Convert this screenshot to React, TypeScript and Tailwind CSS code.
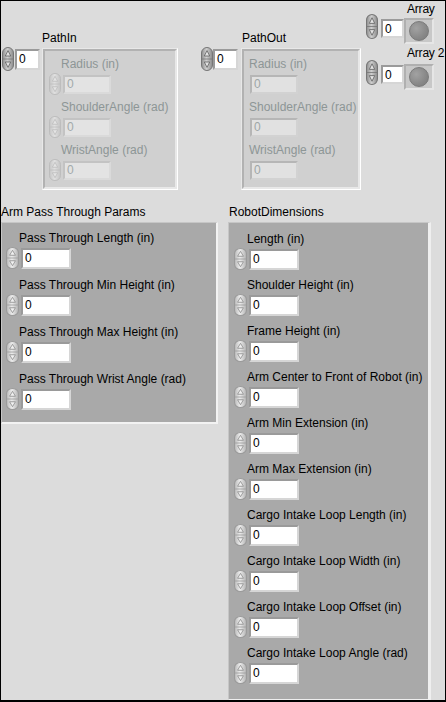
type Tone = "dark" | "light" | "ghost";

const tones: Record<Tone, { a: string; b: string; c: string; stroke: string; arrow: string; arrowStroke: string }> = {
  dark: { a: "#8e8e8e", b: "#cfcfcf", c: "#8a8a8a", stroke: "#767676", arrow: "#e4e4e4", arrowStroke: "#5e5e5e" },
  light: { a: "#b8b8b8", b: "#ececec", c: "#b2b2b2", stroke: "#9a9a9a", arrow: "#f0f0f0", arrowStroke: "#8a8a8a" },
  ghost: { a: "#c6c6c6", b: "#e0e0e0", c: "#c4c4c4", stroke: "#bcbcbc", arrow: "#e4e4e4", arrowStroke: "#bababa" },
};

function Spinner({ tone, className }: { tone: Tone; className: string }) {
  const t = tones[tone];
  return (
    <svg viewBox="0 0 12 24" preserveAspectRatio="none" className={`shrink-0 ${className}`} aria-hidden>
      <defs>
        <linearGradient id={`spin-${tone}`} x1="0" x2="1" y1="0" y2="0">
          <stop offset="0" stopColor={t.a} />
          <stop offset="0.45" stopColor={t.b} />
          <stop offset="1" stopColor={t.c} />
        </linearGradient>
      </defs>
      <rect x="0.5" y="0.5" width="11" height="23" rx="5.5" fill={`url(#spin-${tone})`} stroke={t.stroke} />
      <line x1="1" y1="12" x2="11" y2="12" stroke={t.stroke} strokeWidth="0.8" />
      <path d="M6 3.6 L8.7 9 H3.3 Z" fill={t.arrow} stroke={t.arrowStroke} strokeWidth="0.8" />
      <path d="M3.3 15 H8.7 L6 20.4 Z" fill={t.arrow} stroke={t.arrowStroke} strokeWidth="0.8" />
    </svg>
  );
}

type BoxKind = "control" | "disabled" | "indicator";

function Box({ kind, className }: { kind: BoxKind; className: string }) {
  const look =
    kind === "control"
      ? "bg-white text-black border-t-[#9a9a9a] border-l-[#9a9a9a] border-r-[#d6d6d6] border-b-[#d6d6d6]"
      : kind === "disabled"
        ? "bg-[#e3e3e3] text-[#a2aaaa] border-t-[#c3c3c3] border-l-[#c3c3c3] border-r-[#dadada] border-b-[#dadada]"
        : "bg-[#e1e1e1] text-[#9ea6a6] border-t-[#b6b6b6] border-l-[#b6b6b6] border-r-[#d2d2d2] border-b-[#d2d2d2]";
  return (
    <div className={`flex shrink-0 items-center border-2 pl-[2px] text-[12px] leading-[14px] ${look} ${className}`}>
      0
    </div>
  );
}

function Led() {
  return (
    <div className="flex h-[26px] w-[30px] shrink-0 items-center justify-center border-2 border-t-[#b0b0b0] border-l-[#b0b0b0] border-r-[#e6e6e6] border-b-[#e6e6e6] bg-[#c8c8c8]">
      <div className="h-[20px] w-[20px] rounded-full border border-[#7a7a7a] bg-[radial-gradient(circle_at_35%_35%,#a2a2a2,#888888_60%,#7a7a7a)]" />
    </div>
  );
}

function SubItem({ label, kind }: { label: string; kind: "disabled" | "indicator" }) {
  return (
    <div className="flex flex-col">
      <div
        className={`h-[14px] whitespace-nowrap leading-[14px] text-[#8d9696] ${kind === "disabled" ? "pl-[12px]" : "pl-0"}`}
      >
        {label}
      </div>
      <div className="mt-[2px] flex h-[22px] items-center gap-[2px]">
        {kind === "disabled" ? <Spinner tone="ghost" className="h-[22px] w-[12px]" /> : <div className="w-[0px]" />}
        <Box kind={kind} className={`h-[19px] w-[48px] ${kind === "indicator" ? "ml-[-1px]" : ""}`} />
      </div>
    </div>
  );
}

function DarkItem({ label }: { label: string }) {
  return (
    <div className="flex flex-col">
      <div className="h-[14px] whitespace-nowrap pl-[13px] leading-[14px] text-black">{label}</div>
      <div className="mt-[2px] flex h-[22px] items-center gap-[2px]">
        <Spinner tone="light" className="h-[22px] w-[13px]" />
        <Box kind="control" className="h-[21px] w-[50px]" />
      </div>
    </div>
  );
}

function ArrayBlock({ label, className, rowClass }: { label: string; className: string; rowClass: string }) {
  return (
    <div className={`flex flex-col ${className}`}>
      <div className="h-[14px] whitespace-nowrap pl-[41px] leading-[14px] tracking-[-0.2px] text-black">{label}</div>
      <div className={`flex items-start ${rowClass}`}>
        <Spinner tone="dark" className="h-[25px] w-[12px]" />
        <Box kind="control" className="ml-[3px] mt-[5px] h-[19px] w-[23px]" />
        <div className="mt-[4px]">
          <Led />
        </div>
      </div>
    </div>
  );
}

const armParams = [
  "Pass Through Length (in)",
  "Pass Through Min Height (in)",
  "Pass Through Max Height (in)",
  "Pass Through Wrist Angle (rad)",
];

const robotDims = [
  "Length (in)",
  "Shoulder Height (in)",
  "Frame Height (in)",
  "Arm Center to Front of Robot (in)",
  "Arm Min Extension (in)",
  "Arm Max Extension (in)",
  "Cargo Intake Loop Length (in)",
  "Cargo Intake Loop Width (in)",
  "Cargo Intake Loop Offset (in)",
  "Cargo Intake Loop Angle (rad)",
];

const pathFields = ["Radius (in)", "ShoulderAngle (rad)", "WristAngle (rad)"];

export default function App() {
  return (
    <div className="flex h-[702px] w-[446px] flex-col overflow-hidden border-t border-l border-r border-b-2 border-black bg-[#dcdcdc] font-['Liberation_Sans',Arial,sans-serif] text-[12px] text-black">
      {/* top row: path clusters and arrays */}
      <div className="flex h-[204px] shrink-0 items-start">
        <div className="ml-[1px] mt-[46px] flex items-center gap-[1px]">
          <Spinner tone="dark" className="h-[24px] w-[12px]" />
          <Box kind="control" className="h-[21px] w-[25px]" />
        </div>
        <div className="ml-[2px] mt-[30px] flex flex-col">
          <div className="h-[14px] leading-[14px]">PathIn</div>
          <div className="mt-[3px] h-[142px] w-[136px] border border-t-[#e8e8e8] border-l-[#e8e8e8] border-r-white border-b-white">
            <div className="flex h-full flex-col gap-[5px] border-2 border-t-[#b2b2b2] border-l-[#b2b2b2] border-r-[#e8e8e8] border-b-[#e8e8e8] bg-[#d0d0d0] pl-[4px] pt-[6px]">
              {pathFields.map((f) => (
                <SubItem key={f} label={f} kind="disabled" />
              ))}
            </div>
          </div>
        </div>

        <div className="ml-[23px] mt-[46px] flex items-center">
          <Spinner tone="dark" className="h-[24px] w-[12px]" />
          <Box kind="control" className="h-[21px] w-[25px]" />
        </div>
        <div className="ml-[3px] mt-[30px] flex flex-col">
          <div className="h-[14px] pl-[1px] leading-[14px]">PathOut</div>
          <div className="mt-[3px] h-[142px] w-[120px] border border-t-[#e8e8e8] border-l-[#e8e8e8] border-r-white border-b-white">
            <div className="flex h-full flex-col gap-[5px] border-2 border-t-[#b2b2b2] border-l-[#b2b2b2] border-r-[#e8e8e8] border-b-[#e8e8e8] bg-[#d0d0d0] pl-[5px] pt-[6px]">
              {pathFields.map((f) => (
                <SubItem key={f} label={f} kind="indicator" />
              ))}
            </div>
          </div>
        </div>

        <div className="ml-[5px] flex flex-col">
          <ArrayBlock label="Array" className="mt-[1px]" rowClass="mt-[-2px]" />
          <ArrayBlock label="Array 2" className="mt-[2px]" rowClass="mt-0" />
        </div>
      </div>

      {/* bottom row: parameter clusters */}
      <div className="flex min-h-0 flex-1">
        <div className="flex w-[217px] flex-col self-start">
          <div className="h-[14px] leading-[14px]">Arm Pass Through Params</div>
          <div className="mt-[3px] flex h-[202px] flex-col gap-[9px] border-t border-l border-r-2 border-b-2 border-t-[#c6c6c6] border-l-[#c6c6c6] border-r-[#f2f2f2] border-b-[#f2f2f2] bg-[#a9a9a9] pl-[4px] pt-[8px]">
            {armParams.map((p) => (
              <DarkItem key={p} label={p} />
            ))}
          </div>
        </div>

        <div className="ml-[10px] flex w-[203px] flex-col">
          <div className="h-[14px] pl-[1px] leading-[14px]">RobotDimensions</div>
          <div className="mt-[3px] flex flex-1 flex-col gap-[8px] border-t border-l border-r-[3px] border-b border-t-[#c6c6c6] border-l-[#c6c6c6] border-r-[#efefef] border-b-[#efefef] bg-[#a9a9a9] pl-[5px] pt-[9px]">
            {robotDims.map((p) => (
              <DarkItem key={p} label={p} />
            ))}
          </div>
        </div>
      </div>
    </div>
  );
}
